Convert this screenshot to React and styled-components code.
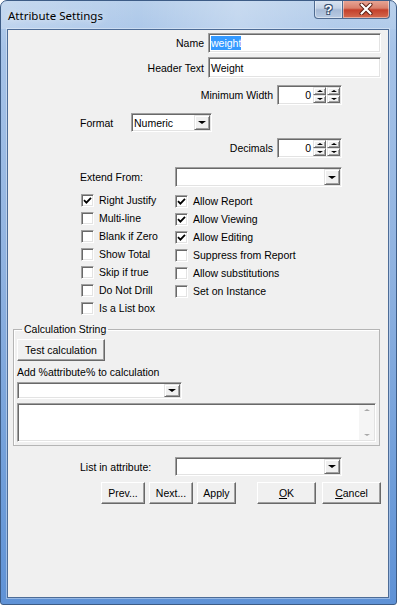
import React from 'react';
import styled, { createGlobalStyle } from 'styled-components';

const GlobalStyle = createGlobalStyle`
  html, body { margin: 0; padding: 0; background: #fff; }
  * { box-sizing: border-box; }
`;

const Window = styled.div`
  width: 397px;
  height: 605px;
  display: flex;
  flex-direction: column;
  border: 1px solid #3d5c86;
  border-radius: 7px 7px 3px 3px;
  overflow: hidden;
  background: linear-gradient(180deg, #b7cfeb 0%, #a6c3e8 8%, #8fb2e0 45%, #6f9dd9 80%, #5f92d6 100%);
`;

const TitleBar = styled.div`
  height: 28px;
  display: flex;
  align-items: center;
  padding-left: 7px;
  background: linear-gradient(90deg, rgba(255,255,255,.22), rgba(255,255,255,0) 35%, rgba(255,255,255,.25) 60%, rgba(255,255,255,.05) 85%);
`;

const Title = styled.div`
  font-family: "Noto Sans", "Open Sans", sans-serif;
  font-size: 11.5px;
  color: #000;
  text-shadow: 0 0 6px rgba(255,255,255,.9);
`;

const Caption = styled.div`
  margin-left: auto;
  margin-right: 6px;
  margin-top: -1px;
  align-self: flex-start;
  display: flex;
`;

const CapBtn = styled.div`
  height: 19px;
  width: ${p => p.$w}px;
  display: flex;
  align-items: center;
  justify-content: center;
  border: 1px solid #4f6b91;
  border-top: none;
  border-radius: ${p => p.$r};
  background: ${p => p.$close
    ? 'linear-gradient(180deg, #e9a99a 0%, #d9806c 45%, #c4402b 55%, #d46a4f 100%)'
    : 'linear-gradient(180deg, #dbe5f2 0%, #c3d2e6 45%, #a6bad6 55%, #b9cbe3 100%)'};
  box-shadow: inset 0 0 0 1px rgba(255,255,255,.45);
  & + & { border-left: none; }
`;

const HelpMark = styled.span`
  font-family: "Liberation Sans", Arial, sans-serif;
  font-weight: bold;
  font-size: 13px;
  color: #fff;
  text-shadow: 0 0 1px #2b3f5c, 1px 1px 0 #3a5274, -1px -1px 0 #3a5274, 1px -1px 0 #3a5274, -1px 1px 0 #3a5274;
`;

const Frame = styled.div`
  flex: 1;
  display: flex;
  padding: 0 7px 6px 6px;
`;

const Client = styled.div`
  flex: 1;
  display: flex;
  flex-direction: column;
  background: #f0f0f0;
  border: 1px solid #4d6c97;
  box-shadow: 0 0 0 1px rgba(255,255,255,.35);
  font-family: "Liberation Sans", Arial, sans-serif;
  font-size: 10.5px;
  color: #000;
`;

const Row = styled.div`
  display: flex;
  align-items: center;
  height: ${p => p.$h}px;
  margin-top: ${p => p.$mt}px;
  padding-left: ${p => p.$pl || 0}px;
`;

const Label = styled.div`
  width: ${p => p.$w}px;
  flex: none;
  text-align: ${p => (p.$right ? 'right' : 'left')};
  padding-right: ${p => (p.$right ? 4 : 0)}px;
  white-space: nowrap;
`;

const Sunken = styled.div`
  width: ${p => p.$w}px;
  height: ${p => p.$h || 20}px;
  flex: none;
  display: flex;
  align-items: stretch;
  background: #fff;
  border: 1px solid;
  border-color: #a0a0a0 #fff #fff #a0a0a0;
  box-shadow: inset 1px 1px #696969, inset -1px -1px #e3e3e3;
  padding: 1px;
`;

const FieldText = styled.div`
  flex: 1;
  display: flex;
  align-items: center;
  justify-content: ${p => (p.$right ? 'flex-end' : 'flex-start')};
  padding: 0 ${p => (p.$right ? 2 : 1)}px 0 1px;
  white-space: nowrap;
  overflow: hidden;
`;

const Selected = styled.span`
  background: #3399ff;
  color: #fff;
  padding: 1px 0;
`;

const Raised = styled.div`
  background: #f0f0f0;
  border: 1px solid;
  border-color: #e3e3e3 #696969 #696969 #e3e3e3;
  box-shadow: inset 1px 1px #fff, inset -1px -1px #a0a0a0;
  display: flex;
  align-items: center;
  justify-content: center;
`;

const DropBtn = styled(Raised)`
  width: 16px;
  flex: none;
`;

const Tri = styled.span`
  width: 0;
  height: 0;
  border-left: ${p => p.$s}px solid transparent;
  border-right: ${p => p.$s}px solid transparent;
  ${p => (p.$up ? 'border-bottom' : 'border-top')}: ${p => p.$s - 1}px solid ${p => p.$c || '#000'};
`;

const SpinCol = styled.div`
  width: 13px;
  flex: none;
  display: flex;
  flex-direction: column;
  & + & { margin-left: 1px; }
`;

const SpinBtn = styled(Raised)`
  flex: 1;
`;

const Checks = styled.div`
  display: flex;
  margin-top: 4px;
  padding-left: 73px;
`;

const CheckCol = styled.div`
  width: ${p => p.$w}px;
  display: flex;
  flex-direction: column;
  margin-top: ${p => p.$mt || 0}px;
`;

const CheckRow = styled.div`
  height: 18px;
  display: flex;
  align-items: center;
  gap: 5px;
`;

const Box = styled.div`
  width: 13px;
  height: 13px;
  flex: none;
  background: #fff;
  border: 1px solid;
  border-color: #a0a0a0 #fff #fff #a0a0a0;
  box-shadow: inset 1px 1px #696969, inset -1px -1px #e3e3e3;
  display: flex;
  align-items: center;
  justify-content: center;
`;

const Group = styled.fieldset`
  margin: 5px 0 0 5px;
  width: 367px;
  padding: 3px;
  border: 1px solid #b5b5b5;
  box-shadow: 1px 1px 0 #fff inset;
  min-width: 0;
`;

const Legend = styled.legend`
  padding: 0 2px;
  margin-left: 5px;
  line-height: 14px;
`;

const Button = styled.button`
  width: ${p => p.$w}px;
  height: 22px;
  margin-left: ${p => p.$ml || 0}px;
  padding: 0;
  flex: none;
  font: inherit;
  color: #000;
  background: #f0f0f0;
  border: 1px solid;
  border-color: #fff #696969 #696969 #fff;
  box-shadow: inset -1px -1px #a0a0a0;
`;

const SubLabel = styled.div`
  margin-top: 4px;
  line-height: 14px;
`;

const Stack = styled.div`
  margin-top: ${p => p.$mt}px;
`;

const Memo = styled(Sunken)`
  justify-content: flex-end;
`;

const ScrollBar = styled.div`
  width: 15px;
  background: #f5f5f5;
  display: flex;
  flex-direction: column;
  justify-content: space-between;
  align-items: center;
  padding: 4px 0;
`;

const Check = () => (
  <svg width="9" height="9" viewBox="0 0 9 9">
    <path d="M1 4.2 L3.4 6.6 L8 1.8" fill="none" stroke="#000" strokeWidth="1.8" />
  </svg>
);

const CloseX = () => (
  <svg width="14" height="12" viewBox="0 0 14 12">
    <path d="M2.5 1.5 L11.5 10.5 M11.5 1.5 L2.5 10.5" stroke="#5a1c12" strokeWidth="4" strokeLinecap="round" />
    <path d="M2.5 1.5 L11.5 10.5 M11.5 1.5 L2.5 10.5" stroke="#fff" strokeWidth="2.2" strokeLinecap="round" />
  </svg>
);

const Combo = ({ w, h, text }) => (
  <Sunken $w={w} $h={h}>
    <FieldText>{text}</FieldText>
    <DropBtn><Tri $s={4} /></DropBtn>
  </Sunken>
);

const Spin = ({ value }) => (
  <Sunken $w={65}>
    <FieldText $right>{value}</FieldText>
    {[0, 1].map(i => (
      <SpinCol key={i}>
        <SpinBtn><Tri $s={3} $up /></SpinBtn>
        <SpinBtn><Tri $s={3} /></SpinBtn>
      </SpinCol>
    ))}
  </Sunken>
);

const CheckItem = ({ label, on }) => (
  <CheckRow>
    <Box>{on && <Check />}</Box>
    <span>{label}</span>
  </CheckRow>
);

const left = [
  ['Right Justify', true],
  ['Multi-line', false],
  ['Blank if Zero', false],
  ['Show Total', false],
  ['Skip if true', false],
  ['Do Not Drill', false],
  ['Is a List box', false],
];

const right = [
  ['Allow Report', true],
  ['Allow Viewing', true],
  ['Allow Editing', true],
  ['Suppress from Report', false],
  ['Allow substitutions', false],
  ['Set on Instance', false],
];

export default function App() {
  return (
    <>
      <GlobalStyle />
      <Window>
        <TitleBar>
          <Title>Attribute Settings</Title>
          <Caption>
            <CapBtn $w={29} $r="0 0 0 4px"><HelpMark>?</HelpMark></CapBtn>
            <CapBtn $w={47} $r="0 0 4px 0" $close><CloseX /></CapBtn>
          </Caption>
        </TitleBar>
        <Frame>
          <Client>
            <Row $mt={3} $h={20}>
              <Label $w={200} $right>Name</Label>
              <Sunken $w={173}>
                <FieldText><Selected>weight</Selected></FieldText>
              </Sunken>
            </Row>
            <Row $mt={4} $h={21}>
              <Label $w={200} $right>Header Text</Label>
              <Sunken $w={173} $h={21}>
                <FieldText>Weight</FieldText>
              </Sunken>
            </Row>
            <Row $mt={7} $h={20}>
              <Label $w={269} $right>Minimum Width</Label>
              <Spin value="0" />
            </Row>
            <Row $mt={8} $h={19} $pl={72}>
              <Label $w={51}>Format</Label>
              <Combo w={81} h={19} text="Numeric" />
            </Row>
            <Row $mt={6} $h={20}>
              <Label $w={269} $right>Decimals</Label>
              <Spin value="0" />
            </Row>
            <Row $mt={9} $h={20} $pl={72}>
              <Label $w={95}>Extend From:</Label>
              <Combo w={167} h={20} text="" />
            </Row>
            <Checks>
              <CheckCol $w={94}>
                {left.map(([l, on]) => <CheckItem key={l} label={l} on={on} />)}
              </CheckCol>
              <CheckCol $w={170} $mt={1}>
                {right.map(([l, on]) => <CheckItem key={l} label={l} on={on} />)}
              </CheckCol>
            </Checks>
            <Group>
              <Legend>Calculation String</Legend>
              <Button $w={88}>Test calculation</Button>
              <SubLabel>Add %attribute% to calculation</SubLabel>
              <Stack $mt={3}>
                <Combo w={165} h={17} text="" />
              </Stack>
              <Stack $mt={4}>
                <Memo $w={359} $h={39}>
                  <ScrollBar>
                    <Tri $s={3} $up $c="#a8a8a8" />
                    <Tri $s={3} $c="#a8a8a8" />
                  </ScrollBar>
                </Memo>
              </Stack>
            </Group>
            <Row $mt={11} $h={19} $pl={72}>
              <Label $w={95}>List in attribute:</Label>
              <Combo w={167} h={19} text="" />
            </Row>
            <Row $mt={6} $h={22} $pl={93}>
              <Button $w={44}>Prev...</Button>
              <Button $w={44} $ml={4}>Next...</Button>
              <Button $w={39} $ml={4}>Apply</Button>
              <Button $w={59} $ml={21}><u>O</u>K</Button>
              <Button $w={59} $ml={6}><u>C</u>ancel</Button>
            </Row>
          </Client>
        </Frame>
      </Window>
    </>
  );
}
